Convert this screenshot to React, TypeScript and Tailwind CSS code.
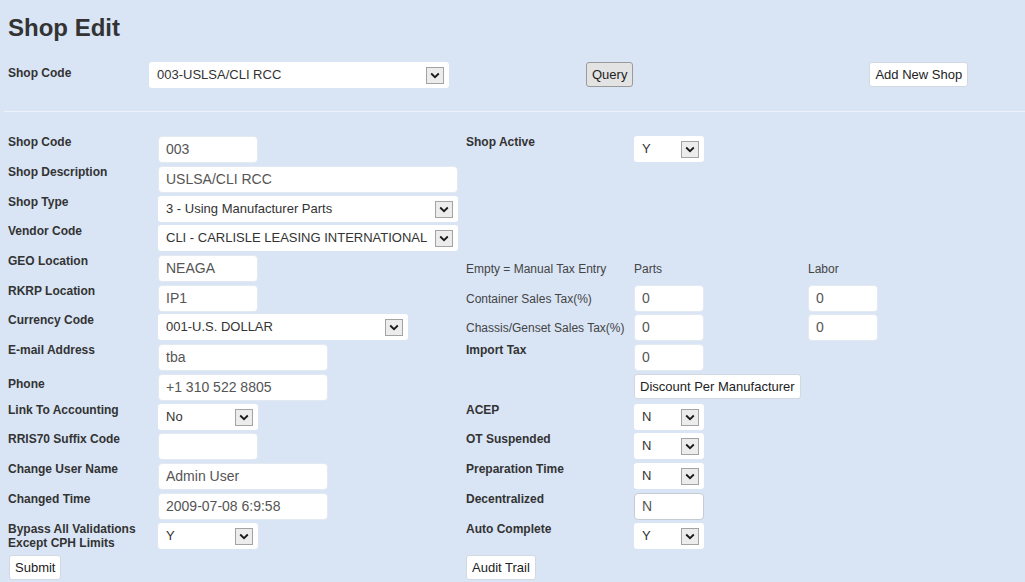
import React from "react";

const font = { fontFamily: '"Liberation Sans", Arial, sans-serif' };

function Arrow() {
  return (
    <div className="w-[18px] h-[17px] border border-[#a3a3a3] bg-[#ececec] flex items-center justify-center shrink-0">
      <svg width="10" height="7" viewBox="0 0 10 7">
        <path d="M1.2 1.5 L5 5.2 L8.8 1.5" stroke="#1a1a1a" strokeWidth="1.8" fill="none" />
      </svg>
    </div>
  );
}

function Select({ value, w }: { value: string; w: string }) {
  return (
    <div className={`${w} h-[26px] rounded-[3px] bg-white flex items-center justify-between pl-[8px] pr-[5px] text-[13px] text-[#333]`}>
      <span className="whitespace-nowrap">{value}</span>
      <Arrow />
    </div>
  );
}

function Input({ value, w, strong }: { value: string; w: string; strong?: boolean }) {
  return (
    <div
      className={`${w} h-[27px] rounded-[4px] bg-white border ${strong ? "border-[#c5cbd3]" : "border-[#e3e9f1]"} flex items-center px-[7px] text-[14px] text-[#555] whitespace-nowrap`}
    >
      {value}
    </div>
  );
}

function Btn({ children, gray }: { children: React.ReactNode; gray?: boolean }) {
  return (
    <div
      className={`h-[25px] px-[5px] rounded-[3px] border flex items-center text-[13px] text-[#222] whitespace-nowrap ${
        gray ? "bg-[#e3e3e3] border-[#9a9a9a]" : "bg-white border-[#d3d9e1]"
      }`}
    >
      {children}
    </div>
  );
}

function L({ children, extra }: { children?: React.ReactNode; extra?: string }) {
  return (
    <div className={`w-[150px] shrink-0 text-[12px] leading-[14px] font-bold text-[#333] ${extra ?? "pt-[1px]"}`}>
      {children}
    </div>
  );
}

function RL({ children, plain }: { children?: React.ReactNode; plain?: boolean }) {
  if (plain)
    return (
      <div className="w-[168px] shrink-0 h-[31px] flex items-center text-[12px] text-[#444] whitespace-nowrap">
        {children}
      </div>
    );
  return (
    <div className="w-[168px] shrink-0 pt-[1px] text-[12px] leading-[14px] font-bold text-[#333]">{children}</div>
  );
}

function F({ children }: { children?: React.ReactNode }) {
  return <div className="w-[308px] shrink-0 pt-[2px]">{children}</div>;
}

function RF({ children }: { children?: React.ReactNode }) {
  return <div className="pt-[2px] flex">{children}</div>;
}

export default function App() {
  return (
    <div className="w-[1025px] h-[582px] bg-[#d9e5f5] overflow-hidden px-[8px] pt-[14px]" style={font}>
      <h1 className="text-[24px] leading-[28px] font-bold text-[#333]">Shop Edit</h1>

      <div className="flex items-start mt-[20px]">
        <div className="w-[141px] shrink-0 mt-[4px] text-[12px] leading-[14px] font-bold text-[#333]">Shop Code</div>
        <Select value="003-USLSA/CLI RCC" w="w-[300px]" />
        <div className="ml-[137px]">
          <Btn gray>Query</Btn>
        </div>
        <div className="ml-[236px]">
          <Btn>Add New Shop</Btn>
        </div>
      </div>

      <div className="-ml-[4px] -mr-[8px] mt-[23px] h-0 border-t border-[#eef3fb]" />

      <div className="mt-[22px]">
        <div className="flex h-[30px]">
          <L>Shop Code</L>
          <F><Input value="003" w="w-[100px]" /></F>
          <RL>Shop Active</RL>
          <RF><Select value="Y" w="w-[70px]" /></RF>
        </div>
        <div className="flex h-[30px]">
          <L>Shop Description</L>
          <F><Input value="USLSA/CLI RCC" w="w-[300px]" /></F>
        </div>
        <div className="flex h-[29px]">
          <L>Shop Type</L>
          <F><Select value="3 - Using Manufacturer Parts" w="w-[300px]" /></F>
        </div>
        <div className="flex h-[30px]">
          <L>Vendor Code</L>
          <F><Select value="CLI - CARLISLE LEASING INTERNATIONAL" w="w-[300px]" /></F>
        </div>
        <div className="flex h-[30px]">
          <L>GEO Location</L>
          <F><Input value="NEAGA" w="w-[100px]" /></F>
          <RL plain>Empty = Manual Tax Entry</RL>
          <div className="flex h-[31px] items-center text-[12px] text-[#444]">
            <div className="w-[174px]">Parts</div>
            <div>Labor</div>
          </div>
        </div>
        <div className="flex h-[29px]">
          <L>RKRP Location</L>
          <F><Input value="IP1" w="w-[100px]" /></F>
          <RL plain>Container Sales Tax(%)</RL>
          <RF>
            <div className="w-[174px]"><Input value="0" w="w-[70px]" /></div>
            <Input value="0" w="w-[70px]" />
          </RF>
        </div>
        <div className="flex h-[30px]">
          <L>Currency Code</L>
          <F><Select value="001-U.S. DOLLAR" w="w-[250px]" /></F>
          <RL plain>Chassis/Genset Sales Tax(%)</RL>
          <RF>
            <div className="w-[174px]"><Input value="0" w="w-[70px]" /></div>
            <Input value="0" w="w-[70px]" />
          </RF>
        </div>
        <div className="flex h-[30px]">
          <L>E-mail Address</L>
          <F><Input value="tba" w="w-[170px]" /></F>
          <RL>Import Tax</RL>
          <RF><Input value="0" w="w-[70px]" /></RF>
        </div>
        <div className="flex h-[30px]">
          <L extra="pt-[5px]">Phone</L>
          <F><Input value="+1 310 522 8805" w="w-[170px]" /></F>
          <RL></RL>
          <RF><div className="h-[26px] flex"><Btn>Discount Per Manufacturer</Btn></div></RF>
        </div>
        <div className="flex h-[29px]">
          <L>Link To Accounting</L>
          <F><Select value="No" w="w-[100px]" /></F>
          <RL>ACEP</RL>
          <RF><Select value="N" w="w-[70px]" /></RF>
        </div>
        <div className="flex h-[30px]">
          <L>RRIS70 Suffix Code</L>
          <F><Input value="" w="w-[100px]" /></F>
          <RL>OT Suspended</RL>
          <RF><Select value="N" w="w-[70px]" /></RF>
        </div>
        <div className="flex h-[30px]">
          <L>Change User Name</L>
          <F><Input value="Admin User" w="w-[170px]" /></F>
          <RL>Preparation Time</RL>
          <RF><Select value="N" w="w-[70px]" /></RF>
        </div>
        <div className="flex h-[30px]">
          <L>Changed Time</L>
          <F><Input value="2009-07-08 6:9:58" w="w-[170px]" /></F>
          <RL>Decentralized</RL>
          <RF><Input value="N" w="w-[70px]" strong /></RF>
        </div>
        <div className="flex h-[34px]">
          <L extra="leading-[12px] pt-[1px]">
            Bypass All Validations
            <br />
            Except CPH Limits
          </L>
          <F><Select value="Y" w="w-[100px]" /></F>
          <RL>Auto Complete</RL>
          <RF><Select value="Y" w="w-[70px]" /></RF>
        </div>
        <div className="flex">
          <div className="w-[458px] shrink-0 pl-[1px]">
            <div className="inline-flex"><Btn>Submit</Btn></div>
          </div>
          <div className="inline-flex"><Btn>Audit Trail</Btn></div>
        </div>
      </div>
    </div>
  );
}
